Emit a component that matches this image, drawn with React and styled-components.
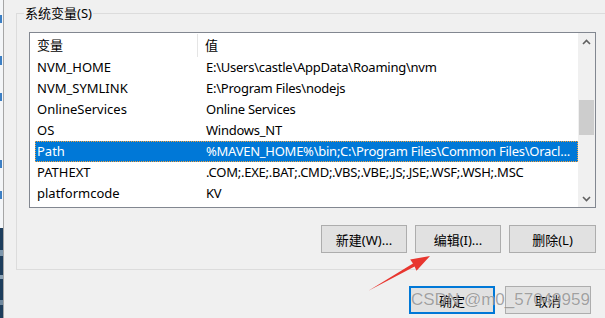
import React from 'react'
import styled, { createGlobalStyle } from 'styled-components'

const GlobalStyle = createGlobalStyle`
  html, body { margin:0; padding:0; }
  body {
    background:#f0f0f0;
    font-family:"Noto Sans","Noto Sans CJK SC",sans-serif;
    font-size:13px;
    color:#000;
    overflow:hidden;
  }
`

const Page = styled.div`
  position:relative;
  display:flex;
  width:605px;
  height:318px;
  overflow:hidden;
`

const Side = styled.div`
  width:3px;
  flex-shrink:0;
  border-right:1px solid #a6a6a6;
  background:#f4f6f8;
`

const Main = styled.div`
  flex:1;
  padding-left:12px;
  display:flex;
  flex-direction:column;
`

const GroupBox = styled.fieldset`
  margin:4px 0 0;
  padding:0 0 16px 12px;
  width:640px;
  min-width:0;
  box-sizing:border-box;
  border:1px solid #dcdcdc;
`

const GroupTitle = styled.legend`
  margin-left:-5px;
  padding:0 1px;
  line-height:18px;
  font-size:13px;
`

const ListView = styled.div`
  margin-top:10px;
  width:567px;
  height:176px;
  box-sizing:border-box;
  border:1px solid #828790;
  background:#fff;
  display:flex;
  overflow:hidden;
`

const ListBody = styled.div`
  flex:1;
  overflow:hidden;
`

const HeaderRow = styled.div`
  display:grid;
  grid-template-columns:168px 1fr;
  height:24px;
  align-items:center;
`

const HeaderCell = styled.div`
  height:23px;
  margin-top:1px;
  line-height:22px;
  padding-left:7px;
  border-right:${p => (p.$divider ? '1px solid #e5e5e5' : 'none')};
`

const Row = styled.div`
  display:grid;
  grid-template-columns:163px 1fr;
  height:21px;
  line-height:19px;
  margin-left:5px;
  box-sizing:border-box;
  border:1px ${p => (p.$selected ? 'dotted #f5a23c' : 'solid transparent')};
  background:${p => (p.$selected ? '#0078d7' : 'transparent')};
  color:${p => (p.$selected ? '#fff' : '#000')};
`

const Cell = styled.div`
  padding-left:${p => (p.$value ? '7px' : '1px')};
  letter-spacing:${p => (p.$value ? '-0.25px' : '0')};
  white-space:nowrap;
  overflow:hidden;
`

const ScrollBar = styled.div`
  width:17px;
  flex-shrink:0;
  background:#f0f0f0;
  display:flex;
  flex-direction:column;
  align-items:center;
`

const ScrollArrow = styled.div`
  height:17px;
  width:17px;
  display:flex;
  align-items:center;
  justify-content:center;
`

const ScrollTrack = styled.div`
  flex:1;
  width:100%;
`

const ScrollThumb = styled.div`
  margin:${p => p.$offset}px 1px 0;
  height:35px;
  background:#cdcdcd;
`

const ButtonRow = styled.div`
  width:567px;
  display:flex;
  justify-content:flex-end;
  gap:8px;
  margin-top:17px;
`

const Button = styled.button`
  width:${p => p.$w || 86}px;
  height:28px;
  box-sizing:border-box;
  padding:0;
  background:#e1e1e1;
  border:${p => (p.$primary ? '2px solid #0078d7' : '1px solid #adadad')};
  font-family:"Noto Sans","Noto Sans CJK SC",sans-serif;
  font-size:13px;
  color:#000;
`

const BottomRow = styled.div`
  display:flex;
  gap:10px;
  margin:16px 0 0 393px;
`

const Watermark = styled.div`
  position:absolute;
  left:411px;
  top:291px;
  font-family:"Liberation Sans",Arial,sans-serif;
  font-size:17px;
  line-height:17px;
  color:rgba(105,105,105,0.6);
  text-shadow:0 0 1px rgba(255,255,255,0.7);
  white-space:nowrap;
  pointer-events:none;
`

const Arrow = styled.svg`
  position:absolute;
  left:0;
  top:0;
  pointer-events:none;
`

const vars = [
  ['NVM_HOME', 'E:\\Users\\castle\\AppData\\Roaming\\nvm'],
  ['NVM_SYMLINK', 'E:\\Program Files\\nodejs'],
  ['OnlineServices', 'Online Services'],
  ['OS', 'Windows_NT'],
  ['Path', '%MAVEN_HOME%\\bin;C:\\Program Files\\Common Files\\Oracl...'],
  ['PATHEXT', '.COM;.EXE;.BAT;.CMD;.VBS;.VBE;.JS;.JSE;.WSF;.WSH;.MSC'],
  ['platformcode', 'KV'],
  ['PROCESSOR_ARCHITECTURE', 'AMD64'],
]

function SideStrip() {
  return (
    <Side>
      <svg width="3" height="318">
        <rect x="0" y="228" width="3" height="90" fill="#1d3d5c" />
        <rect x="0" y="250" width="3" height="6" fill="#7d97ad" />
        <rect x="0" y="275" width="3" height="4" fill="#8aa2b6" />
        <rect x="0" y="300" width="3" height="5" fill="#6f889e" />
        <rect x="0" y="15" width="2" height="8" fill="#3c7fc4" />
        <rect x="0" y="56" width="2" height="9" fill="#3c7fc4" />
        <rect x="0" y="93" width="2" height="8" fill="#3c7fc4" />
        <rect x="0" y="160" width="2" height="8" fill="#3c7fc4" />
        <rect x="0" y="191" width="2" height="8" fill="#3c7fc4" />
      </svg>
    </Side>
  )
}

export default function App() {
  return (
    <Page>
      <GlobalStyle />
      <SideStrip />
      <Main>
        <GroupBox>
          <GroupTitle>系统变量(S)</GroupTitle>
          <ListView>
            <ListBody>
              <HeaderRow>
                <HeaderCell $divider>变量</HeaderCell>
                <HeaderCell>值</HeaderCell>
              </HeaderRow>
              {vars.map(([name, value]) => (
                <Row key={name} $selected={name === 'Path'}>
                  <Cell>{name}</Cell>
                  <Cell $value>{value}</Cell>
                </Row>
              ))}
            </ListBody>
            <ScrollBar>
              <ScrollArrow>
                <svg width="9" height="6" viewBox="0 0 9 6">
                  <path d="M1 5 L4.5 1.5 L8 5" fill="none" stroke="#606060" strokeWidth="1.6" />
                </svg>
              </ScrollArrow>
              <ScrollTrack>
                <ScrollThumb $offset={50} />
              </ScrollTrack>
              <ScrollArrow>
                <svg width="9" height="6" viewBox="0 0 9 6">
                  <path d="M1 1 L4.5 4.5 L8 1" fill="none" stroke="#606060" strokeWidth="1.6" />
                </svg>
              </ScrollArrow>
            </ScrollBar>
          </ListView>
          <ButtonRow>
            <Button>新建(W)...</Button>
            <Button>编辑(I)...</Button>
            <Button $w={87}>删除(L)</Button>
          </ButtonRow>
        </GroupBox>
        <BottomRow>
          <Button $primary>确定</Button>
          <Button>取消</Button>
        </BottomRow>
      </Main>
      <Watermark>CSDN @m0_57049959</Watermark>
      <Arrow width="605" height="318">
        <polygon
          points="368,291 414.6,266.5 416.5,270.8 430,256 410.2,259.6 413.0,263.5"
          fill="#e8362f"
        />
      </Arrow>
    </Page>
  )
}
